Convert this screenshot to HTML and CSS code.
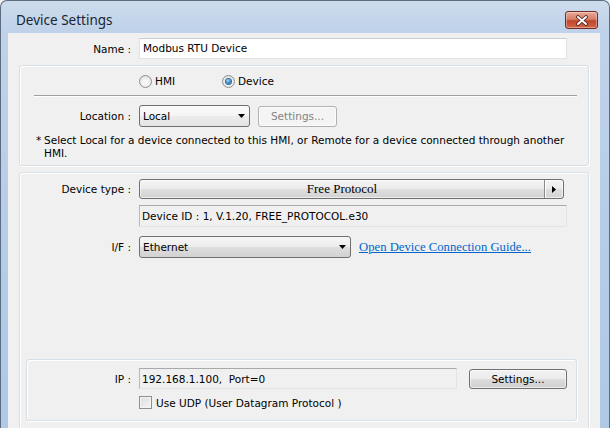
FILE: index.html
```html
<!DOCTYPE html>
<html lang="en">
<head>
    <meta charset="UTF-8">
    <title>Device Settings</title>
    <link rel="stylesheet" href="styles.css">
</head>
<body>
    <div class="window">
        <div class="titlebar">
            <span class="title">Device Settings</span>
            <span class="close-btn">
                <svg width="14" height="11" viewBox="0 0 14 11">
                    <path d="M3 2 L11 9 M11 2 L3 9" stroke="#4a2018" stroke-width="3.6" stroke-linecap="round"/>
                    <path d="M3 2 L11 9 M11 2 L3 9" stroke="#fff" stroke-width="2" stroke-linecap="round"/>
                </svg>
            </span>
        </div>

        <div class="client">
            <div class="row name-row">
                <span class="lbl">Name :</span>
                <div class="textbox name-box">Modbus RTU Device</div>
            </div>

            <!-- HMI / Device location -->
            <div class="group loc-group">
                <div class="radio-row">
                    <span class="opt"><span class="radio"></span>HMI</span>
                    <span class="opt"><span class="radio on"></span>Device</span>
                </div>
                <div class="sep"></div>
                <div class="row loc-row">
                    <span class="lbl">Location :</span>
                    <div class="combo combo-loc">
                        <span>Local</span>
                        <svg class="arrow-down" width="7" height="4" viewBox="0 0 7 4"><polygon points="0,0 7,0 3.5,4" fill="#000"/></svg>
                    </div>
                    <span class="btn btn-off">Settings...</span>
                </div>
                <p class="note">
                    <span class="star">*</span>
                    <span>Select Local for a device connected to this HMI, or Remote for a device connected through another HMI.</span>
                </p>
            </div>

            <!-- Device type / interface -->
            <div class="group dev-group">
                <div class="row type-row">
                    <span class="lbl">Device type :</span>
                    <div class="type-btn">
                        <span class="type-name">Free Protocol</span>
                        <span class="type-more">
                            <svg width="4" height="7" viewBox="0 0 4 7"><polygon points="0,0 4,3.5 0,7" fill="#000"/></svg>
                        </span>
                    </div>
                </div>
                <div class="row id-row">
                    <span class="lbl"></span>
                    <div class="field id-field">Device ID : 1, V.1.20, FREE_PROTOCOL.e30</div>
                </div>
                <div class="row if-row">
                    <span class="lbl">I/F :</span>
                    <div class="combo combo-if">
                        <span>Ethernet</span>
                        <svg class="arrow-down" width="7" height="4" viewBox="0 0 7 4"><polygon points="0,0 7,0 3.5,4" fill="#000"/></svg>
                    </div>
                    <a class="guide-link" href="#">Open Device Connection Guide...</a>
                </div>

                <div class="group ip-group">
                    <div class="row ip-row">
                        <span class="lbl">IP :</span>
                        <div class="field ip-field">192.168.1.100,&nbsp; Port=0</div>
                        <span class="btn">Settings...</span>
                    </div>
                    <div class="row udp-row">
                        <span class="lbl"></span>
                        <span class="checkbox"></span>
                        <span>Use UDP (User Datagram Protocol )</span>
                    </div>
                </div>
            </div>
        </div>
    </div>
</body>
</html>
```

FILE: styles.css
```css
body {
    margin: 0;
    padding: 0;
    background-color: #f0f0f0;
    font-family: "DejaVu Sans", Tahoma, sans-serif;
    font-size: 10.5px;
    color: #000;
}

.window {
    width: 610px;
    height: 428px;
    box-sizing: border-box;
    display: flex;
    flex-direction: column;
    overflow: hidden;
    border: 1px solid #5c6d82;
    border-bottom: none;
    border-radius: 7px 7px 0 0;
    padding: 0 9px 0 7px;
    background: linear-gradient(to bottom, #cddcec 0px, #bfd2e9 30px, #aec8e6 100%);
}

/* Title bar */
.titlebar {
    height: 32px;
    flex-shrink: 0;
    display: flex;
    justify-content: space-between;
    align-items: flex-start;
}

.title {
    font-family: "Noto Sans", "Open Sans", sans-serif;
    font-size: 13.5px;
    color: #1b2430;
    margin: 10px 0 0 8px;
}

.close-btn {
    width: 33px;
    height: 18px;
    box-sizing: border-box;
    margin-top: 10px;
    margin-right: 2px;
    display: flex;
    align-items: center;
    justify-content: center;
    border: 1px solid #6d2d22;
    border-radius: 3px;
    background: linear-gradient(to bottom, #e9a99a 0%, #d77f69 45%, #c0442a 55%, #d2664b 100%);
    box-shadow: inset 0 0 0 1px rgba(255, 255, 255, 0.35);
}

/* Client area */
.client {
    flex: 1;
    background-color: #f0f0f0;
    padding-top: 5px;
}

.row {
    display: flex;
    align-items: center;
}

.lbl {
    width: 111px;
    margin-right: 8px;
    text-align: right;
    flex-shrink: 0;
}

.name-row .lbl {
    width: 123px;
}

.textbox {
    box-sizing: border-box;
    height: 21px;
    line-height: 19px;
    padding-left: 3px;
    background-color: #fff;
    border: 1px solid #e2e3ea;
    border-top-color: #c9cbd1;
}

.name-box {
    width: 428px;
}

/* Group boxes */
.group {
    border: 1px solid #d5dfe5;
    border-radius: 3px;
    box-shadow: inset 1px 1px 0 #fff, 1px 1px 0 #fff;
}

.loc-group {
    margin: 6px 11px 0 11px;
    padding-bottom: 5px;
}

.radio-row {
    display: flex;
    height: 16px;
    align-items: center;
    margin-top: 7px;
    padding-left: 119px;
}

.opt {
    width: 83px;
    display: flex;
    align-items: center;
}

.radio {
    width: 13px;
    height: 13px;
    box-sizing: border-box;
    margin-right: 3px;
    border-radius: 50%;
    border: 1px solid #8e8f8f;
    background: radial-gradient(circle at 50% 60%, #f6f6f6 30%, #d6d6d6 100%);
    display: flex;
    align-items: center;
    justify-content: center;
}

.radio.on::before {
    content: "";
    width: 5px;
    height: 5px;
    border-radius: 50%;
    background: radial-gradient(circle at 40% 35%, #a6dcf7 0%, #2d86c2 55%, #124e82 100%);
    box-shadow: 0 0 0 1px #2f6f9f;
}

.sep {
    height: 1px;
    margin: 6px 11px 0 14px;
    background-color: #a0a0a0;
    border-bottom: 1px solid #fff;
}

.loc-row {
    margin-top: 8px;
    height: 22px;
}

/* Drop-down lists */
.combo {
    box-sizing: border-box;
    height: 22px;
    display: flex;
    align-items: center;
    justify-content: space-between;
    padding: 0 4px 0 3px;
    border: 1px solid #707070;
    border-radius: 3px;
    background: linear-gradient(to bottom, #f6f6f6 0%, #ececec 50%, #dedede 51%, #d2d2d2 100%);
}

.combo-loc {
    width: 111px;
    background: linear-gradient(to bottom, #fbfbfb 0%, #f4f4f4 50%, #ececec 51%, #e4e4e4 100%);
}

.combo-if {
    width: 212px;
}

/* Buttons */
.btn {
    box-sizing: border-box;
    width: 98px;
    height: 20px;
    margin-left: 12px;
    display: flex;
    align-items: center;
    justify-content: center;
    border: 1px solid #707070;
    border-radius: 3px;
    background: linear-gradient(to bottom, #f2f2f2 0%, #ebebeb 50%, #dddddd 51%, #cfcfcf 100%);
    box-shadow: inset 0 0 0 1px rgba(255, 255, 255, 0.6);
}

.btn-off {
    width: 79px;
    height: 21px;
    margin-left: 8px;
    color: #838383;
    border-color: #adb2b5;
    background: #f4f4f4;
}

.note {
    display: flex;
    margin: 7px 14px 0 0;
    padding-left: 16px;
    line-height: 13px;
}

.star {
    width: 8px;
    flex-shrink: 0;
}

/* Device group */
.dev-group {
    margin: 6px 11px 0 11px;
    padding-bottom: 30px;
}

.type-row {
    margin-top: 6px;
}

.type-btn {
    box-sizing: border-box;
    width: 425px;
    height: 20px;
    display: flex;
    border: 1px solid #707070;
    border-radius: 3px;
    background: linear-gradient(to bottom, #f4f4f4 0%, #ebebeb 50%, #dedede 51%, #d3d3d3 100%);
    box-shadow: inset 0 0 0 1px rgba(255, 255, 255, 0.6);
}

.type-name {
    flex: 1;
    display: flex;
    align-items: center;
    justify-content: center;
    font-family: "Liberation Serif", "Times New Roman", serif;
    font-size: 13px;
    border-right: 1px solid #8a8a8a;
    box-shadow: 1px 0 0 #fff;
}

.type-more {
    width: 18px;
    display: flex;
    align-items: center;
    justify-content: center;
}

.field {
    box-sizing: border-box;
    height: 22px;
    padding-left: 2px;
    display: flex;
    align-items: center;
    border: 1px solid #e4e4e4;
    border-top-color: #a9a9a9;
    border-left-color: #b9b9b9;
    background-color: #f0f0f0;
}

.id-row {
    margin-top: 6px;
}

.id-field {
    width: 428px;
}

.if-row {
    margin-top: 9px;
}

.guide-link {
    margin-left: 8px;
    font-family: "Liberation Serif", "Times New Roman", serif;
    font-size: 12.7px;
    color: #0066cc;
}

/* IP sub-group */
.ip-group {
    margin: 101px 11px 0 6px;
    padding-bottom: 10px;
}

.ip-group .lbl {
    width: 104px;
}

.ip-row {
    margin-top: 8px;
}

.ip-field {
    width: 318px;
    height: 21px;
}

.udp-row {
    margin-top: 6px;
    height: 15px;
}

.checkbox {
    width: 13px;
    height: 13px;
    box-sizing: border-box;
    margin-right: 4px;
    border: 1px solid #8f8f8f;
    background: linear-gradient(135deg, #dcdcdc 0%, #f6f6f6 100%);
    box-shadow: inset 0 0 0 1px #f4f4f4;
}
```
